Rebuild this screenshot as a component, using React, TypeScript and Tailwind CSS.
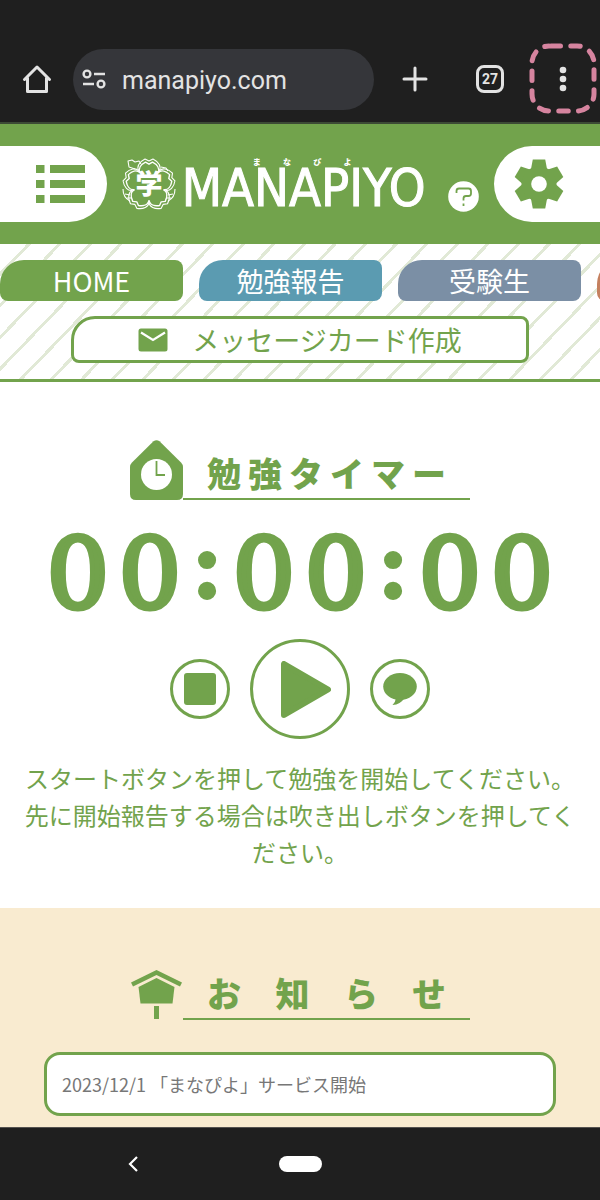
import React from "react";

const GREEN = "#72a34c";

function HomeIcon() {
  return (
    <svg width="30" height="30" viewBox="0 0 30 30" fill="none" stroke="#e3e3e3" strokeWidth="3" strokeLinejoin="round" strokeLinecap="round">
      <path d="M2.500 15.500 15 3 27.500 15.500M5.500 14v13.500h19V14" />
    </svg>
  );
}

function TuneIcon() {
  return (
    <svg width="24" height="20" viewBox="0 0 24 20" fill="none" stroke="#e3e3e3" strokeWidth="2.400">
      <circle cx="5" cy="5" r="3.400" />
      <path d="M12 5h11M1 15h11" />
      <circle cx="19" cy="15" r="3.400" />
    </svg>
  );
}

function MoreIcon() {
  return (
    <svg width="72" height="72" viewBox="0 0 72 72">
      <rect x="4" y="3" width="62" height="65" rx="17" fill="none" stroke="#d6849f" strokeWidth="5" strokeLinecap="round" strokeDasharray="9.500 10.300" strokeDashoffset="-2" />
      <g fill="#e3e3e3">
        <circle cx="35" cy="27" r="3.300" />
        <circle cx="35" cy="36" r="3.300" />
        <circle cx="35" cy="45" r="3.300" />
      </g>
    </svg>
  );
}

function ListIcon() {
  return (
    <svg width="49" height="38" viewBox="0 0 49 38" fill={GREEN}>
      {[0, 15, 30].map((y) => (
        <g key={y}>
          <rect x="0" y={y} width="8.500" height="8" />
          <rect x="14" y={y} width="35" height="8" />
        </g>
      ))}
    </svg>
  );
}

function GearIcon() {
  return (
    <svg width="50" height="50" viewBox="-25 -25 50 50" fill={GREEN}>
      {[0, 60, 120, 180, 240, 300].map((a) => (
        <path key={a} d="M-6.200-24.500H6.200L8-15V0H-8V-15z" transform={`rotate(${a})`} />
      ))}
      <circle r="17.500" />
      <circle r="7.800" fill="#fff" />
    </svg>
  );
}

function Emblem() {
  return (
    <svg width="54" height="54" viewBox="-27 -27 54 54" fill="none" stroke="#fff" strokeLinejoin="round" className="shrink-0">
      {[0, 72, 144, 216, 288].map((a) => (
        <g key={a} transform={`translate(0 1) rotate(${a})`}>
          <path strokeWidth="1.100" d="M-10.300-14.200C-12.500-18-10-23-4-26L0-24 4-26C10-23 12.500-18 10.300-14.200" />
          <path strokeWidth="1.400" d="M-9-12.400C-11-16.500-8-20.500-3.500-22.800L0-20.800 3.500-22.800C8-20.500 11-16.500 9-12.400" />
        </g>
      ))}
      <path strokeWidth="1.100" d="M-14-15l-6-2-1-6 4-1 3 2 4-1 2 3M12-17l5 1 2 3M-26 5c0 6 3 10 7 12M-24 10l5 1M-22 14l4 0M26 5c0 6-3 10-7 12M24 10l-5 1M22 14l-4 0" />
      <text x="0" y="10" textAnchor="middle" fontSize="27" fontWeight="900" fill="#fff" stroke="none" fontFamily="'Noto Sans CJK JP', sans-serif">学</text>
    </svg>
  );
}

function HelpIcon() {
  return (
    <svg width="31" height="31" viewBox="0 0 31 31">
      <circle cx="15.500" cy="15.500" r="15.300" fill="#fff" />
      <path d="M8.500 12V10q0-2.500 2.500-2.500h9.500q2.500 0 2.500 2.500v2.500q0 2.500-2.500 2.500H18q-2.500 0-2.500 2.500v2M15.500 22.500v2.500" fill="none" stroke={GREEN} strokeWidth="1.800" />
    </svg>
  );
}

function MailIcon() {
  return (
    <svg width="30" height="24" viewBox="0 0 30 24">
      <rect x="0.500" y="0.500" width="29" height="23" rx="2.500" fill={GREEN} />
      <path d="M3 4.500 15 12 27 4.500" fill="none" stroke="#fff" strokeWidth="2.200" />
    </svg>
  );
}

function ClockHouseIcon() {
  return (
    <svg width="53" height="60" viewBox="0 0 53 60">
      <path d="M23.500 1.200q3-2 6 0L51 22.500q2 2 2 4.500V54q0 6-6 6H6q-6 0-6-6V27q0-2.500 2-4.500z" fill={GREEN} />
      <circle cx="26.500" cy="34.500" r="15.500" fill="#fff" />
      <path d="M26.500 21v14H35" fill="none" stroke={GREEN} strokeWidth="1.800" />
    </svg>
  );
}

function BoardIcon() {
  return (
    <svg width="53" height="50" viewBox="0 0 53 50" fill={GREEN}>
      <path d="M26.500 0 52 12.500 50 16.500 26.500 5 3 16.500 1 12.500z" />
      <path d="M26.500 8 44.500 17 42.500 33.500H10.500L8.500 17z" />
      <rect x="24" y="36" width="5" height="13" />
    </svg>
  );
}

function SectionTitle({ icon, children }: { icon: React.ReactNode; children: string }) {
  return (
    <div className="mx-auto flex w-[340px] max-w-full items-end">
      <span className="shrink-0">{icon}</span>
      <h2 className="flex-1 border-b-2 border-[#72a34c] px-6 text-[34px] leading-[50px] font-black text-[#72a34c] [text-align-last:justify]">
        {children}
      </h2>
    </div>
  );
}

function TimerDisplay({ value }: { value: string }) {
  return (
    <time className="mt-[18px] flex justify-center font-['DejaVu_Serif',serif] text-[98px] leading-[112px]">
      {value.split("").map((c, i) =>
        c === ":" ? (
          <span key={i} className="w-[42px] leading-[94px] font-bold">:</span>
        ) : (
          <span key={i} className="w-[72px] [-webkit-text-stroke:5px_#72a34c]">{c}</span>
        ),
      )}
    </time>
  );
}

const tabs = [
  { label: "HOME", color: "bg-[#72a34c]" },
  { label: "勉強報告", color: "bg-[#5b9bb1]" },
  { label: "受験生", color: "bg-[#7b8fa5]" },
  { label: "", color: "bg-[#c5805f]" },
];

export default function App() {
  return (
    <div className="flex min-h-screen flex-col bg-white font-['Noto_Sans_CJK_JP',sans-serif]">
      <header className="flex items-center border-b-2 border-[#3c4a35] bg-[#1f1f1f] pt-[43px] pb-[7px] pl-[22px]">
        <button aria-label="Home" className="shrink-0"><HomeIcon /></button>
        <div className="ml-[21px] flex h-[61px] min-w-0 flex-1 items-center rounded-full bg-[#35363a] pl-[9px]">
          <button aria-label="Site settings" className="shrink-0"><TuneIcon /></button>
          <span className="mt-1 ml-4 truncate font-[Roboto,sans-serif] text-[25px] leading-8 text-[#e3e3e3]">manapiyo.com</span>
        </div>
        <div className="flex shrink-0 items-center">
          <button aria-label="New tab" className="ml-7">
            <svg width="26" height="26" viewBox="-1 -1 26 26" stroke="#e3e3e3" strokeWidth="3" strokeLinecap="round"><path d="M12 1v22M1 12h22" /></svg>
          </button>
          <button aria-label="Tabs" className="ml-12 flex size-7 items-center justify-center rounded-lg border-3 border-[#e3e3e3] font-[Roboto,sans-serif] text-[14px] leading-none font-bold text-[#e3e3e3]">27</button>
          <button aria-label="More" className="ml-6"><MoreIcon /></button>
        </div>
      </header>

      <div className="flex h-[120px] items-center justify-between bg-[#72a34c]">
        <button aria-label="Menu" className="flex h-[76px] w-[107px] items-center justify-end rounded-r-full bg-white pr-[22px]"><ListIcon /></button>
        <a href="#home" className="flex items-center gap-[6px] text-white">
          <Emblem />
          <span className="flex flex-col">
            <span className="flex justify-between pr-[74px] pl-[71px] text-[8px] leading-[8px] font-black">
              <span>ま</span><span>な</span><span>ぴ</span><span>よ</span>
            </span>
            <span className="font-['DejaVu_Sans_Condensed','DejaVu_Sans',sans-serif] text-[52px] leading-[44px] [-webkit-text-stroke:1px_#ffffff]">MANAPIYO</span>
          </span>
        </a>
        <button aria-label="Help" className="mt-6 ml-2"><HelpIcon /></button>
        <button aria-label="Settings" className="flex h-[76px] w-[106px] items-center rounded-l-full bg-white pl-5"><GearIcon /></button>
      </div>

      <nav className="overflow-hidden border-b-3 border-[#72a34c] bg-[repeating-linear-gradient(-46deg,#ffffff_0px,#ffffff_19px,#e1e9d6_19px,#e1e9d6_22px)] py-4 text-[27px]">
        <div className="flex gap-4">
          {tabs.map((t, i) => (
            <a key={i} href="#tab" aria-label={t.label || undefined} className={`flex h-[41px] w-[183px] shrink-0 items-center justify-center rounded-lg rounded-tl-3xl leading-10 text-white ${t.color}`}>
              {t.label}
            </a>
          ))}
        </div>
        <a href="#card" className="mx-auto mt-[15px] flex h-[47px] w-[458px] max-w-full items-center justify-center gap-6 rounded-lg rounded-tl-3xl border-3 border-[#72a34c] bg-white leading-10 text-[#72a34c]">
          <MailIcon />メッセージカード作成
        </a>
      </nav>

      <section className="px-5 pt-[58px] pb-[38px] text-center text-[#72a34c]">
        <SectionTitle icon={<ClockHouseIcon />}>勉強タイマー</SectionTitle>
        <TimerDisplay value="00:00:00" />
        <div className="mt-[9px] flex items-center justify-center gap-5">
          <button aria-label="Stop" className="flex size-[60px] items-center justify-center rounded-full border-3 border-[#72a34c]">
            <svg width="32" height="32"><rect width="32" height="32" rx="3" fill={GREEN} /></svg>
          </button>
          <button aria-label="Start" className="flex size-[100px] items-center justify-center rounded-full border-3 border-[#72a34c] pl-3">
            <svg width="50" height="57" viewBox="0 0 50 57"><path d="M3 3v51L47 28.500z" fill={GREEN} stroke={GREEN} strokeWidth="6" strokeLinejoin="round" /></svg>
          </button>
          <button aria-label="Comment" className="flex size-[60px] items-center justify-center rounded-full border-3 border-[#72a34c]">
            <svg width="34" height="33" viewBox="0 0 34 33" fill={GREEN}><ellipse cx="17" cy="13.500" rx="16.800" ry="13.500" /><path d="M13 25q-.5 4-3.500 7 8-.5 12-7z" /></svg>
          </button>
        </div>
        <p className="mt-5 text-[24px] leading-[37px]">
          スタートボタンを押して勉強を開始してください。先に開始報告する場合は吹き出しボタンを押してください。
        </p>
      </section>

      <section className="flex-1 bg-[#f9ebd0] px-11 pt-[60px] pb-[11px]">
        <SectionTitle icon={<BoardIcon />}>お知らせ</SectionTitle>
        <a href="#news" className="mt-8 flex h-16 items-center rounded-2xl border-3 border-[#72a34c] bg-white px-[15px] text-[18px] leading-7 text-[#777777]">
          2023/12/1 「まなぴよ」サービス開始
        </a>
      </section>

      <footer className="grid h-[73px] grid-cols-[1fr_auto_1fr] items-center border-t border-[#55524f] bg-[#1f1f1f]">
        <button aria-label="Back" className="mr-3 justify-self-center">
          <svg width="10" height="16" viewBox="0 0 10 16" fill="none" stroke="#fff" strokeWidth="2.200"><path d="M9 1 2 8l7 7" /></svg>
        </button>
        <button aria-label="Home screen" className="h-4 w-[43px] rounded-full bg-white" />
      </footer>
    </div>
  );
}
